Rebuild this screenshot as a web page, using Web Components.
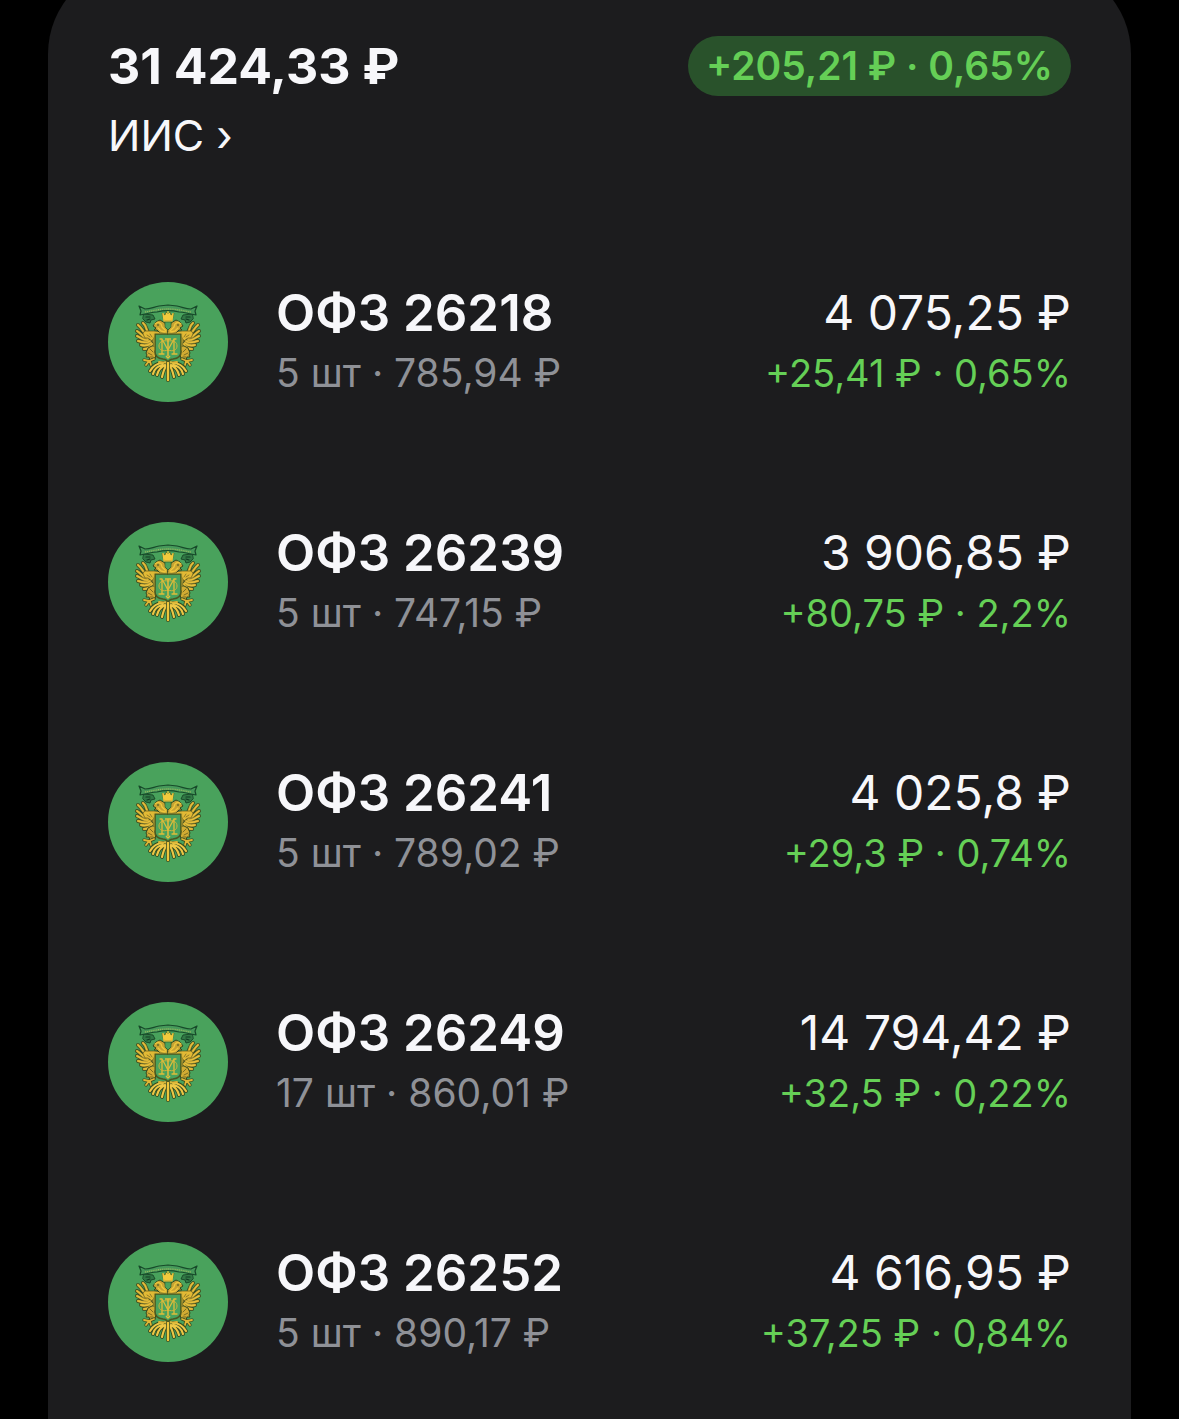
<!DOCTYPE html>
<html lang="ru">
<head>
<meta charset="utf-8">
<meta name="viewport" content="width=device-width, initial-scale=1">
<title>ИИС</title>
<style>
    body {
        margin: 0;
        background: #000;
        color: #f7f7fa;
        font-family: Inter, "Noto Sans", sans-serif;
        --sheet: #1c1c1e;
        --muted: #8f9197;
        --gain: #65cf56;
        --gain-bg: #29522b;
    }
</style>
</head>
<body>

<portfolio-sheet>
    <account-header slot="header" href="#iis">
        <span slot="total">31 424,33 ₽</span>
        <span slot="name">ИИС ›</span>
        <profit-badge slot="profit">+205,21 ₽ · 0,65%</profit-badge>
    </account-header>

    <bond-row name="ОФЗ 26218" holding="5 шт · 785,94 ₽" value="4 075,25 ₽" profit="+25,41 ₽ · 0,65%"></bond-row>
    <bond-row name="ОФЗ 26239" holding="5 шт · 747,15 ₽" value="3 906,85 ₽" profit="+80,75 ₽ · 2,2%"></bond-row>
    <bond-row name="ОФЗ 26241" holding="5 шт · 789,02 ₽" value="4 025,8 ₽" profit="+29,3 ₽ · 0,74%"></bond-row>
    <bond-row name="ОФЗ 26249" holding="17 шт · 860,01 ₽" value="14 794,42 ₽" profit="+32,5 ₽ · 0,22%"></bond-row>
    <bond-row name="ОФЗ 26252" holding="5 шт · 890,17 ₽" value="4 616,95 ₽" profit="+37,25 ₽ · 0,84%"></bond-row>
</portfolio-sheet>

<script>
class PortfolioSheet extends HTMLElement {
    constructor() {
        super();
        this.attachShadow({ mode: 'open' });
        this.shadowRoot.innerHTML = `
        <style>
            :host {
                display: flow-root;
                overflow: hidden;
            }
            main {
                box-sizing: border-box;
                min-height: calc(100vh + 36px);
                margin: -36px 48px 0;
                padding: 72px 60px 48px;
                border-radius: 90px 90px 0 0;
                background: var(--sheet);
            }
            section {
                display: grid;
                gap: 120px;
                margin-top: 120px;
            }
        </style>
        <main>
            <slot name="header"></slot>
            <section role="list"><slot></slot></section>
        </main>
    `;
    }
}

customElements.define('portfolio-sheet', PortfolioSheet);

class AccountHeader extends HTMLElement {
    constructor() {
        super();
        this.attachShadow({ mode: 'open' });
        this.shadowRoot.innerHTML = `
        <style>
            :host {
                display: flex;
                justify-content: space-between;
                align-items: flex-start;
            }
            .account {
                display: grid;
                gap: 12px;
            }
            h1 {
                margin: 0;
                font-size: 50px;
                font-weight: 700;
                line-height: 60px;
            }
            a {
                color: inherit;
                font-size: 43px;
                font-weight: 400;
                line-height: 54px;
                text-decoration: none;
            }
        </style>
        <div class="account">
            <h1><slot name="total"></slot></h1>
            <a><slot name="name"></slot></a>
        </div>
        <slot name="profit"></slot>
    `;
    }

    connectedCallback() {
        this.shadowRoot.querySelector('a').href = this.getAttribute('href');
    }
}

customElements.define('account-header', AccountHeader);

class ProfitBadge extends HTMLElement {
    constructor() {
        super();
        this.attachShadow({ mode: 'open' });
        this.shadowRoot.innerHTML = `
        <style>
            :host {
                display: block;
                padding: 0 18px;
                border-radius: 30px;
                background: var(--gain-bg);
                color: var(--gain);
                font-size: 39px;
                font-weight: 600;
                line-height: 60px;
                white-space: nowrap;
            }
        </style>
        <slot></slot>
    `;
    }
}

customElements.define('profit-badge', ProfitBadge);

class MinfinLogo extends HTMLElement {
    constructor() {
        super();
        this.attachShadow({ mode: 'open' });
        // The eagle is symmetric: the left half is drawn once and mirrored with <use>
        this.shadowRoot.innerHTML = `
        <style>
            :host {
                display: block;
                width: 120px;
                height: 120px;
            }
            svg {
                display: block;
            }
        </style>
        <svg width="120" height="120" viewBox="0 0 120 120" aria-hidden="true">
            <circle cx="60" cy="60" r="60" fill="#49a25c"/>
            <defs>
                <path id="wing" fill="none" d="M41 52c-3-3-2-8-6-11M41 54c-5-1-6-7-11-11M40 56c-5 0-6-4-11-7M40 58c-5 1-6-2-11-4M42 59c-4 3-7 1-12 0M43 61c-3 3-6 3-10 2M44 62c-1 3-4 5-8 5"/>
                <path id="tail" fill="none" d="M55 81c-6 0-10 3-13 8M55 83c-5 1-9 4-10 9M57 83c-4 2-7 6-8 10M58 84c-2 3-3 7-4 11"/>
                <path id="claw" fill="none" d="M46 77l-5 2-5-1M41 79l-3 4M42 79l1 4"/>
                <g id="half" stroke-linejoin="round" stroke-linecap="round">
                    <!-- ribbon tail -->
                    <path d="M36 32l9 1 2 4-4 1-1 3-4-1-3-3z" fill="#327a46" stroke="#164626" stroke-width=".9"/>
                    <path d="M38 35l4 0M39 38l3-1" fill="none" stroke="#123c22" stroke-width="1.2"/>
                    <!-- wing -->
                    <path d="M37 48l9 2 1 15-7 2-5-5-2-7z" fill="#8f7f2b"/>
                    <use href="#wing" stroke="#33491f" stroke-width="4"/>
                    <use href="#wing" stroke="#b39733" stroke-width="2.6"/>
                    <use href="#wing" stroke="#e9c13a" stroke-width="1.4"/>
                    <path d="M37 49l9 0 8 1 0 4-7 0-3 5-4-3-3 0-2-4z" fill="#e2ba35" stroke="#5b571e" stroke-width=".7"/>
                    <path d="M39 53l3 2M42 52l2 3" fill="none" stroke="#7a6a25" stroke-width=".8"/>
                    <!-- neck and head -->
                    <path d="M60 52l-8-1-3-3-3 0 2-2-3-2 3-4 4-2 5 3 1 5 2 2z" fill="#c6a333" stroke="#33491f" stroke-width="1"/>
                    <path d="M47 42l3-2 3 2 1 3 4 4M50 46l3 3 4 1" fill="none" stroke="#efc83d" stroke-width="1.3"/>
                    <circle cx="50" cy="43" r=".8" fill="#28421f"/>
                    <!-- leg and claws -->
                    <path d="M44 64l-4 2-2 5 1 2-1 2 3 0 1 3 5-1 1-5-1-7z" fill="#d3ac33" stroke="#33491f" stroke-width="1"/>
                    <path d="M42 67l3 3M40 71l4 2M42 75l3 0" fill="none" stroke="#625c20" stroke-width=".8"/>
                    <use href="#claw" stroke="#33491f" stroke-width="3.2"/>
                    <use href="#claw" stroke="#e0b735" stroke-width="1.8"/>
                    <!-- tail feathers -->
                    <use href="#tail" stroke="#33491f" stroke-width="3.8"/>
                    <use href="#tail" stroke="#edc745" stroke-width="2.2"/>
                    <path d="M51 80q4 1 9 0" fill="none" stroke="#dcb638" stroke-width="2"/>
                    <!-- shield -->
                    <path d="M60 52H47v18q0 6 8 7 3 0 5 3z" fill="#49a25c"/>
                    <path d="M60 52H47v18q0 6 8 7 3 0 5 3" fill="none" stroke="#4b571f" stroke-width="1.6"/>
                    <path d="M60 51H46v17" fill="none" stroke="#d2ae36" stroke-width=".8"/>
                    <!-- monogram -->
                    <path d="M52 57h2v14M51 72h5M54 57l6 11" fill="none" stroke="#dfbd39" stroke-width="1.3"/>
                    <path d="M60 59c-6-1-9 1-9 5s4 6 9 4" fill="none" stroke="#cdb43b" stroke-width="1"/>
                </g>
            </defs>
            <use href="#half"/>
            <use href="#half" transform="matrix(-1 0 0 1 120 0)"/>
            <path d="M60 57v17M57 57h6M58 74l2 2 2-2" fill="none" stroke="#e2bd3a" stroke-width="1.5"/>
            <path d="M60 81v17" stroke="#33491f" stroke-width="3.8" stroke-linecap="round"/>
            <path d="M60 81v17" stroke="#efc63c" stroke-width="2.4" stroke-linecap="round"/>
            <path d="M57 40h6v5l-3 3-3-3z" fill="#49a25c" stroke="#315a25" stroke-width=".6"/>
            <!-- ribbon -->
            <path d="M31 24l6 3c5 0 9-2 14-3l9-1 9 1c5 1 9 3 14 3l6-3-2 5 1 4-5-1c-5-1-8-2-12-2-8-2-14-2-22 0-4 0-7 1-12 2l-5 1 1-4z" fill="#46995a" stroke="#174a2a" stroke-width="1.2" stroke-linejoin="round"/>
            <path d="M37 30c8-1 13-3 23-3s15 2 23 3" fill="none" stroke="#8fb65e" stroke-width="1.3" stroke-dasharray="1.2 .7"/>
            <!-- crown -->
            <path d="M56 39l-2-8 3 2 1-3 2 2 2-2 1 3 3-2-2 8z" fill="#f2ca3d" stroke="#56601f" stroke-width=".7" stroke-linejoin="round"/>
            <path d="M55 31l1 8h8l1-8M60 29v4" fill="none" stroke="#f2ca3d" stroke-width="1.2"/>
        </svg>
    `;
    }
}

customElements.define('minfin-logo', MinfinLogo);

class BondRow extends HTMLElement {
    constructor() {
        super();
        this.attachShadow({ mode: 'open' });
        this.shadowRoot.innerHTML = `
        <style>
            :host {
                display: grid;
                grid-template-columns: 120px 1fr auto;
                column-gap: 48px;
                align-items: start;
                height: 120px;
                line-height: 60px;
                white-space: nowrap;
            }
            h2, p {
                margin: 0;
            }
            h2 {
                font-size: 51px;
                font-weight: 600;
            }
            .value {
                font-size: 48px;
            }
            .holding {
                color: var(--muted);
                font-size: 39px;
            }
            .profit {
                color: var(--gain);
                font-size: 38px;
            }
            .bond, .money {
                padding-top: 1px;
            }
            .money {
                text-align: right;
            }
        </style>
        <minfin-logo></minfin-logo>
        <div class="bond">
            <h2></h2>
            <p class="holding"></p>
        </div>
        <div class="money">
            <p class="value"></p>
            <p class="profit"></p>
        </div>
    `;
    }

    connectedCallback() {
        this.setAttribute('role', 'listitem');
        this.shadowRoot.querySelector('h2').textContent = this.getAttribute('name');
        ['holding', 'value', 'profit'].forEach(key => {
            this.shadowRoot.querySelector('.' + key).textContent = this.getAttribute(key);
        });
    }
}

customElements.define('bond-row', BondRow);
</script>
</body>
</html>
